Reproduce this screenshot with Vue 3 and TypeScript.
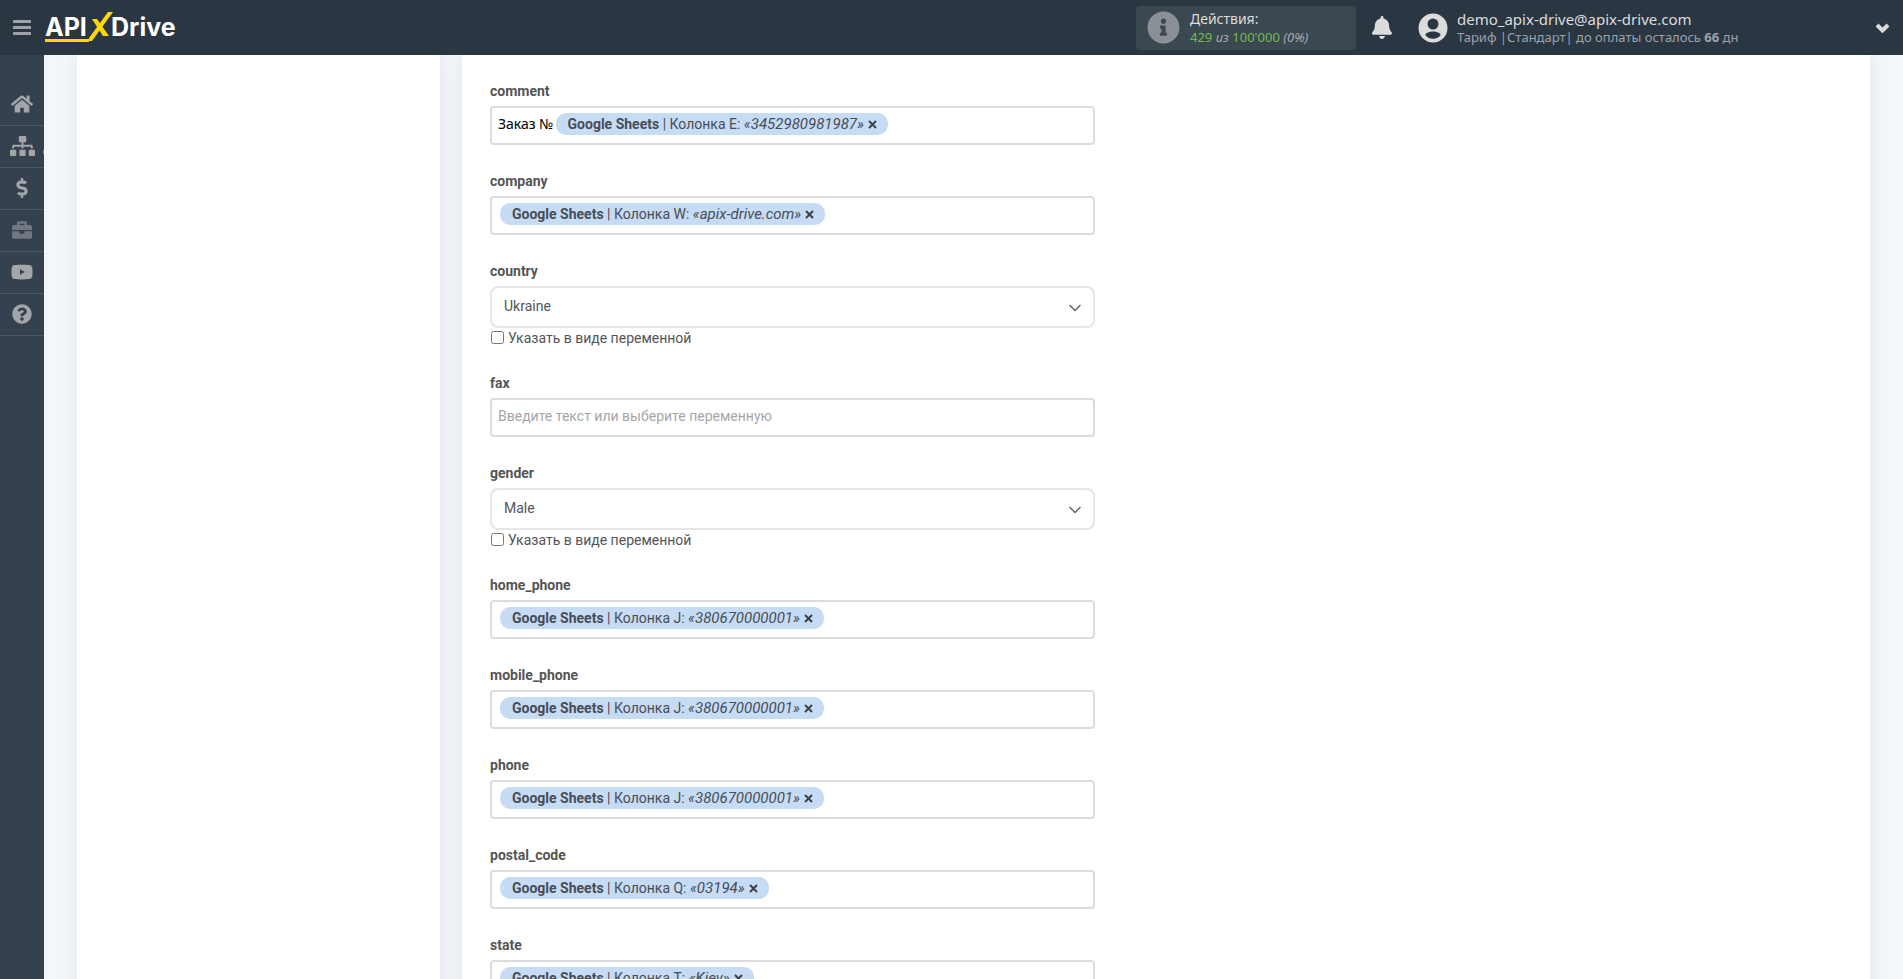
<script setup lang="ts">
import { ref } from 'vue'

interface Tag {
  column: string
  value: string
}
interface Field {
  name: string
  kind: 'text' | 'select'
  prefix?: string
  tag?: Tag
  option?: string
  placeholder?: string
}
interface NavItem {
  label: string
  viewBox: string
  width: number
  height: number
  path: string
  dim?: boolean
  more?: boolean
}

const fields = ref<Field[]>([
  { name: 'comment', kind: 'text', prefix: 'Заказ №', tag: { column: 'E', value: '3452980981987' } },
  { name: 'company', kind: 'text', tag: { column: 'W', value: 'apix-drive.com' } },
  { name: 'country', kind: 'select', option: 'Ukraine' },
  { name: 'fax', kind: 'text', placeholder: 'Введите текст или выберите переменную' },
  { name: 'gender', kind: 'select', option: 'Male' },
  { name: 'home_phone', kind: 'text', tag: { column: 'J', value: '380670000001' } },
  { name: 'mobile_phone', kind: 'text', tag: { column: 'J', value: '380670000001' } },
  { name: 'phone', kind: 'text', tag: { column: 'J', value: '380670000001' } },
  { name: 'postal_code', kind: 'text', tag: { column: 'Q', value: '03194' } },
  { name: 'state', kind: 'text', tag: { column: 'T', value: 'Kiev' } },
])

const nav: NavItem[] = [
  {
    label: 'Главная', viewBox: '0 0 576 512', width: 22, height: 20,
    path: 'M280.37 148.26L96 300.11V464a16 16 0 0 0 16 16l112.06-.29a16 16 0 0 0 15.92-16V368a16 16 0 0 1 16-16h64a16 16 0 0 1 16 16v95.64a16 16 0 0 0 16 16.05L464 480a16 16 0 0 0 16-16V300L295.67 148.26a12.19 12.19 0 0 0-15.3 0zM571.6 251.47L488 182.56V44.05a12 12 0 0 0-12-12h-56a12 12 0 0 0-12 12v72.61L318.47 43a48 48 0 0 0-61 0L4.34 251.47a12 12 0 0 0-1.6 16.9l25.5 31A12 12 0 0 0 45.15 301l235.22-193.74a12.19 12.19 0 0 1 15.3 0L530.9 301a12 12 0 0 0 16.9-1.6l25.5-31a12 12 0 0 0-1.7-16.93z',
  },
  {
    label: 'Связи', viewBox: '0 0 640 512', width: 25, height: 20, more: true,
    path: 'M128 352H32c-17.67 0-32 14.33-32 32v96c0 17.67 14.33 32 32 32h96c17.67 0 32-14.33 32-32v-96c0-17.67-14.33-32-32-32zm-24-80h192v48h48v-48h192v48h48v-57.59c0-21.17-17.23-38.41-38.41-38.41H344v-64h40c17.67 0 32-14.33 32-32V32c0-17.67-14.33-32-32-32H256c-17.67 0-32 14.33-32 32v96c0 17.67 14.33 32 32 32h40v64H94.41C73.23 224 56 241.23 56 262.41V320h48v-48zm264 80h-96c-17.67 0-32 14.33-32 32v96c0 17.67 14.33 32 32 32h96c17.67 0 32-14.33 32-32v-96c0-17.67-14.33-32-32-32zm240 0h-96c-17.67 0-32 14.33-32 32v96c0 17.67 14.33 32 32 32h96c17.67 0 32-14.33 32-32v-96c0-17.67-14.33-32-32-32z',
  },
  {
    label: 'Оплата', viewBox: '0 0 288 512', width: 12, height: 20,
    path: 'M209.2 233.4l-108-31.6C88.7 198.2 80 186.5 80 173.5c0-16.3 13.2-29.5 29.5-29.5h66.3c12.2 0 24.2 3.7 34.2 10.5 6.1 4.1 14.3 3.1 19.5-2l34.8-34c7.1-6.9 6.1-18.4-1.8-24.5C238 74.8 207.4 64.1 176 64V16c0-8.8-7.2-16-16-16h-32c-8.8 0-16 7.2-16 16v48h-2.5C45.8 64-5.4 118.7.5 183.6c4.2 46.1 39.4 83.6 83.8 96.6l102.5 30c12.5 3.7 21.2 15.3 21.2 28.3 0 16.3-13.2 29.5-29.5 29.5h-66.3C100 368 88 364.3 78 357.5c-6.1-4.1-14.3-3.1-19.5 2l-34.8 34c-7.1 6.9-6.1 18.4 1.8 24.5 24.5 19.2 55.1 29.9 86.5 30v48c0 8.8 7.2 16 16 16h32c8.8 0 16-7.2 16-16v-48.2c46.6-.9 90.3-28.6 105.7-72.7 21.5-61.6-14.6-124.8-72.5-141.7z',
  },
  {
    label: 'Кабинет', viewBox: '0 0 512 512', width: 20, height: 20, dim: true,
    path: 'M320 336c0 8.84-7.16 16-16 16h-96c-8.84 0-16-7.16-16-16v-48H0v144c0 25.6 22.4 48 48 48h416c25.6 0 48-22.4 48-48V288H320v48zm144-208h-80V80c0-25.6-22.4-48-48-48H176c-25.6 0-48 22.4-48 48v48H48c-25.6 0-48 22.4-48 48v80h512v-80c0-25.6-22.4-48-48-48zm-144 0H192V96h128v32z',
  },
  {
    label: 'Видео', viewBox: '0 0 22 20', width: 22, height: 20,
    path: 'M4 3C8 2.500 14 2.500 18 3Q21 3.200 21.300 6Q21.700 10 21.300 14Q21 16.800 18 17C14 17.500 8 17.500 4 17Q1 16.800.7 14Q.3 10 .7 6Q1 3.200 4 3zM9 7.200V12.800L13.800 10z',
  },
  {
    label: 'Помощь', viewBox: '0 0 512 512', width: 20, height: 20,
    path: 'M504 256c0 136.997-111.043 248-248 248S8 392.997 8 256C8 119.083 119.043 8 256 8s248 111.083 248 248zM262.655 90c-54.497 0-89.255 22.957-116.549 63.758-3.536 5.286-2.353 12.415 2.715 16.258l34.699 26.31c5.205 3.947 12.621 3.008 16.665-2.122 17.864-22.658 30.113-35.797 57.303-35.797 20.429 0 45.698 13.148 45.698 32.958 0 14.976-12.363 22.667-32.534 33.976C247.128 238.528 216 254.941 216 296v4c0 6.627 5.373 12 12 12h56c6.627 0 12-5.373 12-12v-1.333c0-28.462 83.186-29.647 83.186-106.667 0-58.002-60.165-102-116.531-102zM256 338c-25.365 0-46 20.635-46 46 0 25.364 20.635 46 46 46s46-20.636 46-46c0-25.365-20.635-46-46-46z',
  },
]

function removeTag(field: Field): void {
  field.tag = undefined
}
</script>

<template>
  <div class="app">
    <header class="topbar">
      <button class="icon-btn menu" aria-label="Меню">
        <svg width="18" height="16" viewBox="0 0 18 16"><path d="M1 0h16a1 1 0 0 1 0 3H1a1 1 0 0 1 0-3zM1 6h16a1 1 0 0 1 0 3H1a1 1 0 0 1 0-3zM1 12h16a1 1 0 0 1 0 3H1a1 1 0 0 1 0-3z" /></svg>
      </button>
      <a class="logo" href="#" aria-label="APIXDrive">
        <svg width="136" height="34" viewBox="0 0 136 34">
          <text class="logo-text" x="0" y="25">API</text>
          <path class="logo-mark" d="M0 28h44v3H0zM63 1h5L47 30h-3v-3zM47 8h5l12 17h-6z" />
          <text class="logo-text" x="66" y="25">Drive</text>
        </svg>
      </a>

      <button class="actions">
        <svg class="info" width="33" height="33" viewBox="0 0 512 512"><path d="M256 8C119.043 8 8 119.083 8 256c0 136.997 111.043 248 248 248s248-111.003 248-248C504 119.083 392.957 8 256 8zm0 110c23.196 0 42 18.804 42 42s-18.804 42-42 42-42-18.804-42-42 18.804-42 42-42zm56 254c0 6.627-5.373 12-12 12h-88c-6.627 0-12-5.373-12-12v-24c0-6.627 5.373-12 12-12h12v-64h-12c-6.627 0-12-5.373-12-12v-24c0-6.627 5.373-12 12-12h64c6.627 0 12 5.373 12 12v100h12c6.627 0 12 5.373 12 12v24z" /></svg>
        <span class="actions-text">
          <span class="actions-title">Действия:</span>
          <span class="actions-count"><b>429</b> <i>из</i> <b>100'000</b> <i>(0%)</i></span>
        </span>
      </button>

      <button class="icon-btn bell" aria-label="Уведомления">
        <svg width="20" height="23" viewBox="0 0 448 512"><path d="M224 512c35.32 0 63.97-28.65 63.97-64H160.03c0 35.35 28.65 64 63.97 64zm215.39-149.71c-19.32-20.76-55.47-51.99-55.47-154.29 0-77.7-54.48-139.9-127.94-155.16V32c0-17.67-14.32-32-31.98-32s-31.98 14.33-31.98 32v20.84C118.56 68.1 64.08 130.3 64.08 208c0 102.3-36.15 133.53-55.47 154.29-6 6.45-8.66 14.16-8.61 21.71.11 16.4 12.98 32 32.1 32h383.8c19.12 0 32-15.6 32.1-32 .05-7.55-2.61-15.27-8.61-21.71z" /></svg>
      </button>

      <button class="user">
        <svg width="30" height="30" viewBox="0 0 30 30"><path fill-rule="evenodd" d="M15 0.500a14.500 14.500 0 1 1 0 29a14.500 14.500 0 0 1 0-29zM15 5.500a5.500 5.500 0 1 0 0 11a5.500 5.500 0 0 0 0-11zM15 18.500c-3.500 0-7.300 1.200-7.700 3.500c1.500 2.200 4.200 3.700 7.700 3.700s6.200-1.500 7.700-3.700c-.4-2.300-4.200-3.500-7.700-3.500z" /></svg>
        <span class="user-text">
          <span class="email">demo_apix-drive@apix-drive.com</span>
          <span class="plan">Тариф |Стандарт| до оплаты осталось <b>66</b> дн</span>
        </span>
        <svg class="chevron" width="15" height="10" viewBox="0 0 15 10"><path d="M2 2l5.500 5.500L13 2" /></svg>
      </button>
    </header>

    <div class="body">
      <nav class="sidebar">
        <a v-for="item in nav" :key="item.label" class="nav-item" :class="{ dim: item.dim, more: item.more }" href="#" :aria-label="item.label">
          <svg :width="item.width" :height="item.height" :viewBox="item.viewBox"><path fill-rule="evenodd" :d="item.path" /></svg>
        </a>
      </nav>

      <main class="content">
        <aside class="card"></aside>
        <section class="card form-card">
          <form class="form" @submit.prevent>
            <div v-for="field in fields" :key="field.name" class="field">
              <label class="name" :for="field.name">{{ field.name }}</label>

              <template v-if="field.kind === 'select'">
                <div class="select-wrap">
                  <select :id="field.name">
                    <option>{{ field.option }}</option>
                  </select>
                  <svg class="caret" width="12" height="8" viewBox="0 0 12 8"><path d="M.5 1L6 6.500L11.500 1" /></svg>
                </div>
                <label class="check"><input type="checkbox" /><span>Указать в виде переменной</span></label>
              </template>

              <div v-else class="box">
                <input v-if="field.prefix" v-model="field.prefix" class="prefix" aria-label="Текст перед переменной" />
                <span v-if="field.tag" class="tag">
                  <span><b>Google Sheets</b> | Колонка {{ field.tag.column }}: <i>«{{ field.tag.value }}»</i></span>
                  <button type="button" class="remove" aria-label="Удалить" @click="removeTag(field)">
                    <svg width="9" height="9" viewBox="0 0 9 9"><path d="M1 1l7 7M8 1L1 8" /></svg>
                  </button>
                </span>
                <input :id="field.name" class="entry" :placeholder="field.placeholder" />
              </div>
            </div>
          </form>
        </section>
      </main>
    </div>
  </div>
</template>

<style>
body {
  overflow: hidden;
}
</style>

<style scoped>
* {
  box-sizing: border-box;
}
button,
input,
select {
  font: inherit;
  color: inherit;
  background: none;
  border: 0;
  padding: 0;
  margin: 0;
  outline: 0;
}
svg {
  display: block;
  flex: none;
}
.app {
  display: flex;
  flex-direction: column;
  height: 100vh;
  overflow: hidden;
  background: #f3f7fc;
  font-family: Roboto, "Noto Sans", sans-serif;
  font-size: 14px;
  line-height: 20px;
  color: #555;
}
.topbar {
  position: relative;
  z-index: 2;
  flex: none;
  display: flex;
  align-items: center;
  height: 55px;
  padding: 0 13px;
  background: #2b3643;
  font-family: "Noto Sans", "Open Sans", sans-serif;
}
.icon-btn svg {
  fill: currentColor;
}
.menu {
  color: #9fa3a6;
}
.logo {
  margin-left: 14px;
}
.logo-text {
  font-family: Inter, sans-serif;
  font-size: 25px;
  font-weight: 700;
  fill: #fff;
}
.logo-mark {
  fill: #ffd800;
}
.actions {
  display: flex;
  align-items: center;
  gap: 10px;
  width: 220px;
  height: 44px;
  margin-left: auto;
  padding: 0 11px;
  border-radius: 4px;
  background: #3b4850;
  text-align: left;
}
.info {
  fill: #8a9095;
}
.actions-text,
.user-text {
  display: flex;
  flex-direction: column;
}
.actions-title {
  font-size: 14px;
  line-height: 18px;
  color: #dcdcdc;
}
.actions-count {
  font-size: 13px;
  line-height: 18px;
  color: #a5aab0;
}
.actions-count b {
  font-weight: 400;
  color: #76b852;
}
.bell {
  margin-left: 16px;
  color: #dcdcdc;
}
.user {
  display: flex;
  align-items: center;
  gap: 9px;
  width: 472px;
  margin-left: 26px;
  text-align: left;
}
.user > svg {
  fill: #dcdcdc;
}
.email {
  font-size: 15px;
  line-height: 18px;
  color: #dcdcdc;
}
.plan {
  font-size: 13px;
  line-height: 18px;
  color: #9ba3ac;
}
.user > .chevron {
  margin-left: auto;
  fill: none;
  stroke: #dcdcdc;
  stroke-width: 4;
}
.body {
  flex: 1;
  min-height: 0;
  display: flex;
}
.sidebar {
  flex: none;
  width: 44px;
  padding-top: 29px;
  background: #364150;
}
.nav-item {
  position: relative;
  display: flex;
  align-items: center;
  justify-content: center;
  height: 42px;
  padding-bottom: 1px;
  border-bottom: 1px solid #4b5563;
  color: #a3a6a8;
}
.nav-item svg {
  fill: currentColor;
}
.nav-item.dim {
  color: #707881;
}
.nav-item.more::after {
  content: "";
  position: absolute;
  right: 0;
  top: 24px;
  width: 1px;
  height: 4px;
  background: #7d858e;
}
.content {
  flex: 1;
  min-width: 0;
  display: grid;
  grid-template-columns: 363fr 1408fr;
  gap: 22px;
  padding: 0 33px;
}
.card {
  background: #fff;
  box-shadow: 0 0 18px rgba(0, 0, 0, 0.08);
}
.form-card {
  display: grid;
  grid-template-columns: 605fr 775fr;
  padding: 26px 0 0 28px;
}
.form {
  display: flex;
  flex-direction: column;
  gap: 26px;
}
.field {
  display: flex;
  flex-direction: column;
}
.name {
  margin-bottom: 5px;
  font-weight: 700;
}
.box {
  display: flex;
  align-items: center;
  height: 39px;
  padding: 0 6px 3px;
  border: 2px solid #dcdcdc;
  border-radius: 4px;
}
.prefix {
  flex: none;
  field-sizing: content;
  color: #000;
  font-family: "Noto Sans", sans-serif;
}
.entry {
  flex: 1;
  min-width: 0;
}
.entry::placeholder {
  color: #a6a6a6;
  opacity: 1;
}
.tag {
  flex: none;
  display: flex;
  align-items: center;
  gap: 4px;
  height: 22px;
  margin: 0 2px;
  padding: 0 11px 0 12px;
  border-radius: 10px;
  background: #c6dcf5;
  color: #484c55;
}
.tag i {
  font-size: 15px;
}
.remove svg {
  fill: none;
  stroke: #3c4049;
  stroke-width: 2;
}
.select-wrap {
  position: relative;
}
select {
  display: block;
  width: 100%;
  height: 42px;
  padding: 0 40px 2px 12px;
  border: 2px solid #e6e6e6;
  border-radius: 8px;
  appearance: none;
}
.caret {
  position: absolute;
  right: 14px;
  top: 18px;
  fill: none;
  stroke: #666;
  stroke-width: 1.5;
  pointer-events: none;
}
.check {
  display: flex;
  align-items: center;
  gap: 4px;
  height: 19px;
}
.check input {
  width: 13px;
  height: 13px;
  margin: 0 0 0 1px;
}
</style>
